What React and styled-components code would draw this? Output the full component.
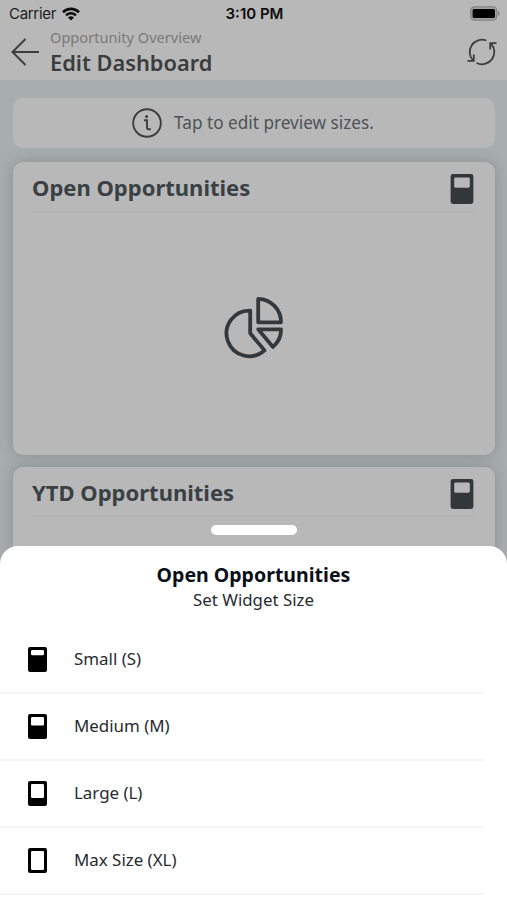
import styled, { createGlobalStyle } from "styled-components";

const GlobalStyle = createGlobalStyle`
  * {
    box-sizing: border-box;
  }
  body {
    margin: 0;
    background-color: #a8adad;
    font-family: "Noto Sans", "Open Sans", sans-serif;
  }
`;

const Screen = styled.div`
  position: relative;
  width: 507px;
  height: 900px;
  overflow: hidden;
  background-color: #a8adad;
`;

const TopBar = styled.div`
  height: 80px;
  background-color: #b8b8b8;
`;

const StatusBar = styled.div`
  display: grid;
  grid-template-columns: 1fr auto 1fr;
  align-items: center;
  height: 27px;
  padding: 0 7px 0 9px;
  font-family: Inter, "Liberation Sans", sans-serif;
  font-size: 15px;
  color: #0c0c0c;
`;

const Carrier = styled.div`
  display: flex;
  align-items: center;
  gap: 6px;
  letter-spacing: -0.3px;
  color: #1c1c1c;
`;

const Time = styled.div`
  font-weight: 600;
`;

const Battery = styled.div`
  display: flex;
  justify-content: flex-end;
`;

const NavBar = styled.div`
  display: flex;
  align-items: center;
  height: 50px;
  padding: 0 10px 0 11px;
`;

const NavTitles = styled.div`
  flex: 1;
  margin-left: 11px;
`;

const NavSubtitle = styled.div`
  font-size: 14.6px;
  line-height: 21px;
  color: #7a7a7a;
`;

const NavTitle = styled.div`
  font-size: 21.8px;
  line-height: 29px;
  font-weight: 600;
  color: #3b3d3f;
`;

const Content = styled.div`
  padding: 18px 12px 0 13px;
`;

const Notice = styled.div`
  display: flex;
  align-items: center;
  justify-content: center;
  gap: 12px;
  height: 50px;
  margin-bottom: 14px;
  padding-right: 2px;
  border-radius: 10px;
  background-color: #b8b8b8;
  font-size: 17.2px;
  color: #4e5356;
`;

const NoticeText = styled.span`
  padding-bottom: 2px;
`;

const Card = styled.div`
  height: 293px;
  margin-bottom: 12px;
  padding: 0 21px 0 19px;
  border-radius: 10px;
  background-color: #b8b8b8;
  box-shadow: 0 0 14px rgba(80, 90, 90, 0.35);
`;

const CardHeader = styled.div`
  display: flex;
  align-items: flex-end;
  justify-content: space-between;
  height: 50px;
  padding-bottom: 7px;
  border-bottom: 1px solid #afb0b0;
`;

const CardTitle = styled.div`
  font-size: 22px;
  line-height: 30px;
  padding-bottom: 2px;
  font-weight: 700;
  color: #3a4145;
`;

const CardBody = styled.div`
  display: flex;
  align-items: center;
  justify-content: center;
  height: 229px;
  padding-left: 4px;
`;

const Sheet = styled.div`
  position: absolute;
  left: 0;
  right: 0;
  bottom: 0;
  height: 354px;
  border-radius: 18px 18px 0 0;
  background-color: #fff;
  color: #0a0f18;
`;

const Handle = styled.div`
  position: absolute;
  top: -21px;
  left: 211px;
  width: 86px;
  height: 10px;
  border-radius: 5px;
  background-color: #fff;
`;

const SheetHeader = styled.div`
  height: 81px;
  padding-top: 16px;
  text-align: center;
`;

const SheetTitle = styled.div`
  font-size: 19.55px;
  line-height: 25px;
  font-weight: 700;
`;

const SheetSubtitle = styled.div`
  font-size: 16.85px;
  line-height: 26px;
  color: #262b30;
`;

const Option = styled.div`
  display: flex;
  align-items: center;
  gap: 27px;
  height: 67px;
  margin-right: 23px;
  padding: 0 0 1px 28px;
  border-bottom: 2px solid #f5f5f5;
  font-size: 16.9px;
  color: #262b30;
`;

const OptionLabel = styled.span`
  padding-bottom: 1px;
`;

const WidgetIcon = ({ fill, cut, opening, width, height }) => (
  <svg width={width} height={height} viewBox="0 0 19 25">
    <rect width="19" height="25" rx="2" fill={fill} />
    <rect x="3" y="3" width="13" height={opening} rx="1.2" fill={cut} />
  </svg>
);

const WifiIcon = () => (
  <svg width="18" height="14" viewBox="0 0 18 14" fill="none" stroke="#0c0c0c">
    <path d="M1 5.2a11.4 11.4 0 0 1 16 0" strokeWidth="2.6" />
    <path d="M4 8.4a7 7 0 0 1 10 0" strokeWidth="2.4" />
    <path d="M9 13.6 6 10.6a4.3 4.3 0 0 1 6 0z" fill="#0c0c0c" stroke="none" />
  </svg>
);

const BatteryIcon = () => (
  <svg width="30" height="15" viewBox="0 0 30 15">
    <rect x="0.8" y="0.8" width="26" height="13.4" rx="4" fill="#a2a2a2" stroke="#858585" strokeWidth="1.3" />
    <rect x="2.6" y="3" width="22.4" height="9" rx="1.6" fill="#000" />
    <path d="M28 5c2 .6 2 4.4 0 5z" fill="#858585" />
  </svg>
);

const BackIcon = () => (
  <svg width="28" height="28" viewBox="0 0 28 28" fill="none" stroke="#3b3d3f" strokeWidth="2">
    <path d="M28 14H1.5M14.5 1 1.5 14l13 13" />
  </svg>
);

const RefreshIcon = () => (
  <svg width="30" height="28" viewBox="0 0 30 28" fill="none" stroke="#3b3d3f" strokeWidth="1.8">
    <path d="M19.3 2.5A12.3 12.3 0 0 0 6 22.4M0.5 22.9h6.3v-6.3" />
    <path d="M9.5 25A12.3 12.3 0 0 0 24 5.6M29.5 5.1h-6.3v6.3" />
  </svg>
);

const InfoIcon = () => (
  <svg width="30" height="30" viewBox="0 0 30 30" fill="none" stroke="#3b3d3f" strokeWidth="1.9">
    <circle cx="15" cy="15" r="13.8" />
    <path d="M12 12.2h3v7.2q0 1.8 1.8 1.8h2" />
    <circle cx="14.6" cy="8.6" r="1.5" fill="#3b3d3f" stroke="none" />
  </svg>
);

const PieIcon = () => (
  <svg width="62" height="64" viewBox="0 0 62 64" fill="none" stroke="#34383b" strokeWidth="3.8" strokeLinejoin="round">
    <path d="M26.2 15.6A22.8 22.8 0 1 0 40.5 55.4L26.2 38.3z" />
    <path d="M34.2 3.9v23.4h22.8a23.2 23.2 0 0 0-22.8-23.4z" />
    <path d="M34.2 34.3h22.8a22 22 0 0 1-8.2 17.6z" />
  </svg>
);

const options = [
  { label: "Small (S)", opening: 5.2 },
  { label: "Medium (M)", opening: 8.4 },
  { label: "Large (L)", opening: 14 },
  { label: "Max Size (XL)", opening: 19 },
];

const DashboardCard = ({ title, children }) => (
  <Card>
    <CardHeader>
      <CardTitle>{title}</CardTitle>
      <WidgetIcon fill="#34373a" cut="#b8b8b8" opening={8.4} width={24} height={30} />
    </CardHeader>
    <CardBody>{children}</CardBody>
  </Card>
);

const App = () => {
  return (
    <>
      <GlobalStyle />
      <Screen>
        <TopBar>
          <StatusBar>
            <Carrier>
              Carrier
              <WifiIcon />
            </Carrier>
            <Time>3:10 PM</Time>
            <Battery>
              <BatteryIcon />
            </Battery>
          </StatusBar>
          <NavBar>
            <BackIcon />
            <NavTitles>
              <NavSubtitle>Opportunity Overview</NavSubtitle>
              <NavTitle>Edit Dashboard</NavTitle>
            </NavTitles>
            <RefreshIcon />
          </NavBar>
        </TopBar>
        <Content>
          <Notice>
            <InfoIcon />
            <NoticeText>Tap to edit preview sizes.</NoticeText>
          </Notice>
          <DashboardCard title="Open Opportunities">
            <PieIcon />
          </DashboardCard>
          <DashboardCard title="YTD Opportunities" />
        </Content>
        <Sheet>
          <Handle />
          <SheetHeader>
            <SheetTitle>Open Opportunities</SheetTitle>
            <SheetSubtitle>Set Widget Size</SheetSubtitle>
          </SheetHeader>
          {options.map(({ label, opening }) => (
            <Option key={label}>
              <WidgetIcon fill="#000" cut="#fff" opening={opening} width={19} height={25} />
              <OptionLabel>{label}</OptionLabel>
            </Option>
          ))}
        </Sheet>
      </Screen>
    </>
  );
};

export default App;
